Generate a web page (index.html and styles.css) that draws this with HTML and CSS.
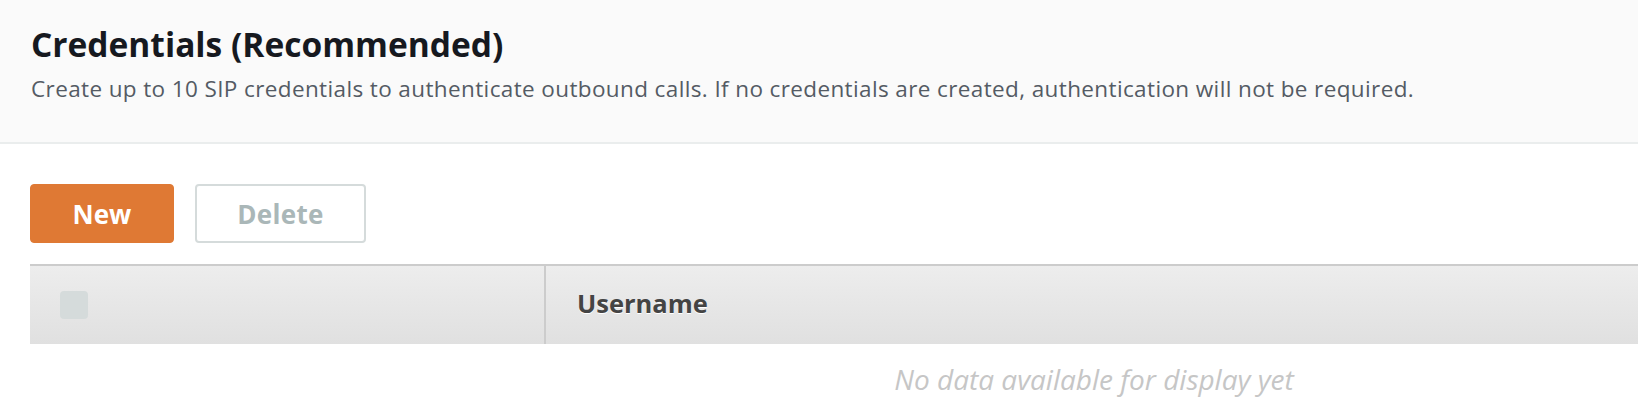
FILE: index.html
```html
<!DOCTYPE html>
<html lang="en">
<head>
<meta charset="utf-8">
<title>Credentials</title>
<link rel="stylesheet" href="styles.css">
</head>
<body>
  <section class="panel-header">
    <h2 class="panel-title">Credentials (Recommended)</h2>
    <p class="panel-desc">Create up to 10 SIP credentials to authenticate outbound calls. If no credentials are created, authentication will not be required.</p>
  </section>
  <div class="panel-body">
    <div class="actions">
      <button class="btn btn-primary" type="button">New</button>
      <button class="btn btn-disabled" type="button" disabled>Delete</button>
    </div>
    <div class="table">
      <div class="table-head">
        <div class="th th-select"><span class="checkbox"></span></div>
        <div class="th th-user">Username</div>
      </div>
      <div class="table-empty">No data available for display yet</div>
    </div>
  </div>
</body>
</html>
```

FILE: styles.css
```css
html, body {
  margin: 0;
  padding: 0;
  background: #ffffff;
  overflow: hidden;
}

body {
  width: 1638px;
  height: 410px;
  font-family: "Open Sans", "Noto Sans", sans-serif;
}

.panel-header {
  background: #fafafa;
  border-bottom: 2px solid #eaeded;
  padding: 24px 0 39px 31px;
}

.panel-title {
  margin: 0;
  font-weight: 700;
  font-size: 33.5px;
  line-height: 40px;
  color: #16191f;
}

.panel-desc {
  margin: 11px 0 0;
  font-size: 22.5px;
  line-height: 28px;
  letter-spacing: 0.38px;
  color: #545b64;
}

.panel-body {
  padding: 40px 0 0 30px;
}

.actions {
  display: flex;
  gap: 21px;
}

.btn {
  height: 59px;
  border-radius: 4px;
  font-family: "Open Sans", "Noto Sans", sans-serif;
  font-weight: 700;
  font-size: 26px;
  padding: 0;
  box-sizing: border-box;
}

.btn-primary {
  width: 144px;
  background: #df7934;
  border: 1px solid #df7934;
  color: #ffffff;
}

.btn-disabled {
  width: 171px;
  background: #ffffff;
  border: 2px solid #d5dbdb;
  color: #aab7b8;
  letter-spacing: 0.3px;
}

.table {
  margin-top: 21px;
  width: 2128px;
}

.table-head {
  display: flex;
  height: 78px;
  border-top: 2px solid #cccccc;
  background: linear-gradient(#ededed, #e0e0e0);
}

.th {
  display: flex;
  align-items: center;
}

.th-select {
  width: 516px;
  padding-left: 30px;
  box-sizing: border-box;
  border-right: 2px solid #cccccc;
}

.checkbox {
  width: 28px;
  height: 28px;
  border-radius: 4px;
  background: #d5dbdb;
}

.th-user {
  flex: 1;
  padding-left: 31px;
  padding-bottom: 4px;
  font-weight: 700;
  font-size: 25.5px;
  color: #444444;
  text-shadow: 0 1px 0 #ffffff;
}

.table-empty {
  text-align: center;
  font-style: italic;
  font-size: 28px;
  line-height: 32px;
  padding-top: 19px;
  color: #c6c6c6;
}
```
